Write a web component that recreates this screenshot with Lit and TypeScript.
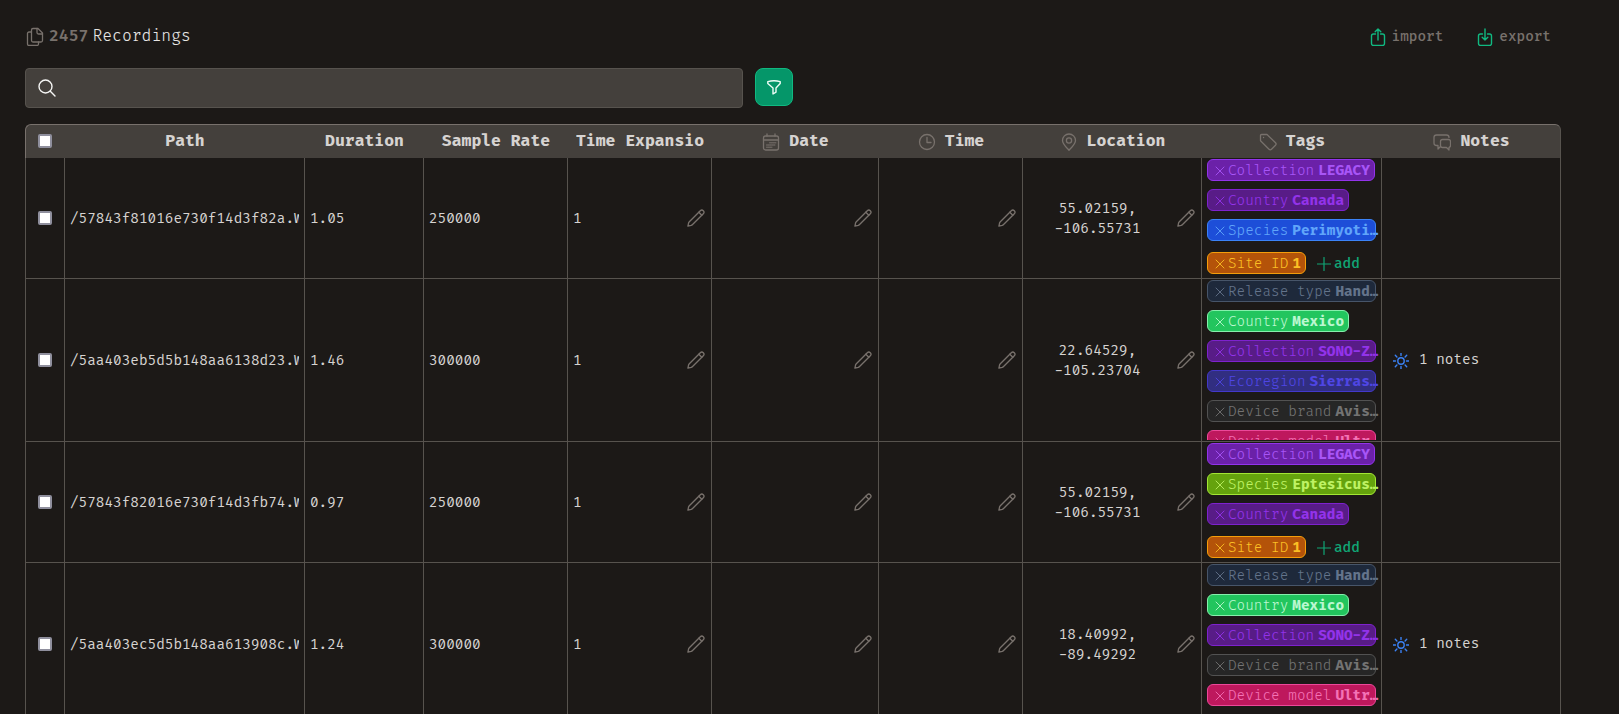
import { LitElement, html, css, svg, nothing } from "lit";
import { customElement, property, state } from "lit/decorators.js";
import { classMap } from "lit/directives/class-map.js";

interface Tag {
  key: string;
  value: string;
  tone: string;
}

interface Recording {
  path: string;
  duration: string;
  rate: string;
  expansion: string;
  lat: string;
  lon: string;
  tags: Tag[];
  notes: number;
}

const tag = (key: string, value: string, tone: string): Tag => ({ key, value, tone });

const RECORDINGS: Recording[] = [
  {
    path: "/57843f81016e730f14d3f82a.WAV",
    duration: "1.05",
    rate: "250000",
    expansion: "1",
    lat: "55.02159",
    lon: "-106.55731",
    notes: 0,
    tags: [
      tag("Collection", "LEGACY", "purple"),
      tag("Country", "Canada", "violet"),
      tag("Species", "Perimyoti…", "blue"),
      tag("Site ID", "1", "amber"),
    ],
  },
  {
    path: "/5aa403eb5d5b148aa6138d23.WAV",
    duration: "1.46",
    rate: "300000",
    expansion: "1",
    lat: "22.64529",
    lon: "-105.23704",
    notes: 1,
    tags: [
      tag("Release type", "Hand…", "slate"),
      tag("Country", "Mexico", "green"),
      tag("Collection", "SONO-Z…", "violet"),
      tag("Ecoregion", "Sierras…", "indigo"),
      tag("Device brand", "Avis…", "neutral"),
      tag("Device model", "Ultr…", "pink"),
    ],
  },
  {
    path: "/57843f82016e730f14d3fb74.WAV",
    duration: "0.97",
    rate: "250000",
    expansion: "1",
    lat: "55.02159",
    lon: "-106.55731",
    notes: 0,
    tags: [
      tag("Collection", "LEGACY", "purple"),
      tag("Species", "Eptesicus…", "lime"),
      tag("Country", "Canada", "violet"),
      tag("Site ID", "1", "amber"),
    ],
  },
  {
    path: "/5aa403ec5d5b148aa613908c.WAV",
    duration: "1.24",
    rate: "300000",
    expansion: "1",
    lat: "18.40992",
    lon: "-89.49292",
    notes: 1,
    tags: [
      tag("Release type", "Hand…", "slate"),
      tag("Country", "Mexico", "green"),
      tag("Collection", "SONO-Z…", "violet"),
      tag("Device brand", "Avis…", "neutral"),
      tag("Device model", "Ultr…", "pink"),
      tag("Ecoregion", "Sierras…", "indigo"),
    ],
  },
];

const GLYPHS: Record<string, unknown> = {
  files: svg`<path d="M7.500 1.500h4.500l4.500 4.500v7.500a1.500 1.500 0 0 1-1.500 1.500H7a1.500 1.500 0 0 1-1.500-1.500V3a1.500 1.500 0 0 1 1.500-1.500z"/><path d="M11 1.500v4a1.500 1.500 0 0 0 1.500 1.500h4"/><path d="M5.500 5H3A1.500 1.500 0 0 0 1.500 6.500v10.500A1.500 1.500 0 0 0 3 18.500h8a1.500 1.500 0 0 0 1.500-1.500v-2"/>`,
  upload: svg`<path d="M9 12V1M6.200 3.800 9 1l2.800 2.800M6.500 6H4.500a2 2 0 0 0-2 2v7.500a2 2 0 0 0 2 2h9a2 2 0 0 0 2-2V8a2 2 0 0 0-2-2H11.500"/>`,
  download: svg`<path d="M9 1v11M6.200 9.200 9 12l2.800-2.800M6.500 6H4.500a2 2 0 0 0-2 2v7.500a2 2 0 0 0 2 2h9a2 2 0 0 0 2-2V8a2 2 0 0 0-2-2H11.500"/>`,
  search: svg`<circle cx="7.500" cy="7.500" r="6.500"/><path d="m12.300 12.300 4.700 4.700"/>`,
  filter: svg`<path d="M1.800 2.600Q8 1 14.200 2.600V4.500L10 9v4.200L7 15V9L1.800 4.500z"/>`,
  calendar: svg`<rect x="1.500" y="3" width="15" height="14" rx="2"/><path d="M1.500 7h15M5 1v2M13 1v2"/><path stroke-width="1" d="M7.500 9.800h6.500M4.500 12H13M4.500 14.200h6" stroke-dasharray="1.500 .500"/>`,
  clock: svg`<circle cx="9" cy="9" r="7.500"/><path d="M9 4.500V9.500h4"/>`,
  pin: svg`<path d="M9 17.200C6 14 2.500 11 2.500 7.500a6.500 6.500 0 0 1 13 0C15.500 11 12 14 9 17.200z"/><circle cx="9" cy="7.500" r="2.600"/>`,
  tag: svg`<path d="M1.500 2.500v5.300L10 16.300a1.800 1.800 0 0 0 2.500 0l4-4a1.800 1.800 0 0 0 0-2.500L8 1.500H2.500a1 1 0 0 0-1 1z"/><path d="M4.500 4.500h.100"/>`,
  chat: svg`<path d="M5 16v-3.500H3.500a2.500 2.500 0 0 1-2.500-2.500V4.500A2.500 2.500 0 0 1 3.500 2H13.500A2.500 2.500 0 0 1 16 4.500M5 16l2.500-2.500"/><path d="M9.500 6.500H15.500A2 2 0 0 1 17.500 8.500v4a2 2 0 0 1-1.500 2v2.500l-2.500-2.500H9.500a2 2 0 0 1-2-2v-4a2 2 0 0 1 2-2z"/>`,
  pencil: svg`<path d="M.900 17.100 1.600 13.800Q1.800 13.200 2.300 12.700L13.300 1.700a2.120 2.120 0 0 1 3 3L5.300 15.700Q4.800 16.200 4.200 16.400z"/><path d="m11.800 3.200 3 3"/>`,
  cross: svg`<path d="m1 1 8 8M9 1 1 9"/>`,
  plus: svg`<path d="M7 .500v13M.500 7h13"/>`,
  sun: svg`<circle cx="8" cy="8" r="3.200"/><path d="M8 0v2.500M8 13.500V16M0 8h2.500M13.500 8H16M2.300 2.300l1.600 1.600M12.100 12.100l1.600 1.600M2.300 13.700l1.600-1.600M12.100 3.900l1.600-1.600"/>`,
};

const icon = (name: string, box: string, size: number, stroke = 1.2) => html`<svg
  class="icon"
  width=${size}
  height=${size}
  viewBox=${box}
  stroke-width=${stroke}
  aria-hidden="true"
>${GLYPHS[name]}</svg>`;

const shared = css`
  *,
  *::before {
    box-sizing: border-box;
  }
  .icon {
    display: block;
    flex: none;
    fill: none;
    stroke: currentColor;
    stroke-linecap: round;
    stroke-linejoin: round;
  }
  button {
    font: inherit;
    color: inherit;
    background: none;
    border: 0;
    margin: 0;
    padding: 0;
    cursor: pointer;
  }
`;

@customElement("recording-tag")
export class RecordingTag extends LitElement {
  @property({ attribute: false }) tag!: Tag;

  static styles = [
    shared,
    css`
      :host {
        display: block;
        max-width: 100%;
      }
      .tag {
        display: flex;
        align-items: center;
        height: 22px;
        padding: 0 4px 0 7px;
        border: 1px solid;
        border-radius: 6px;
        white-space: nowrap;
      }
      .icon {
        margin: 2px 3px 0 0;
      }
      .key {
        padding-top: 2px;
        font-weight: 300;
      }
      .value {
        padding-top: 2px;
        margin-left: 4px;
        font-weight: 700;
      }
      .purple { background: #6b21a8; border-color: #9333ea; color: #a855f7; }
      .violet { background: #581c87; border-color: #7e22ce; color: #9333ea; }
      .blue { background: #1d4ed8; border-color: #3b82f6; color: #60a5fa; }
      .amber { background: #b45309; border-color: #f59e0b; color: #fbbf24; }
      .slate { background: #1e293b; border-color: #475569; color: #64748b; }
      .green { background: #22c55e; border-color: #86efac; color: #bbf7d0; }
      .indigo { background: #312e81; border-color: #4338ca; color: #4f46e5; }
      .neutral { background: #262626; border-color: #525252; color: #737373; }
      .pink { background: #be185d; border-color: #ec4899; color: #f472b6; }
      .lime { background: #65a30d; border-color: #a3e635; color: #bef264; }
    `,
  ];

  render() {
    const { key, value, tone } = this.tag;
    return html`<div class=${classMap({ tag: true, [tone]: true })}>
      <button aria-label="Remove ${key}">${icon("cross", "0 0 10 10", 10, 0.9)}</button>
      <span class="key">${key}</span><span class="value">${value}</span>
    </div>`;
  }
}

@customElement("app-root")
export class AppRoot extends LitElement {
  @state() private query = "";

  static styles = [
    shared,
    css`
      :host {
        display: block;
        height: 100vh;
        overflow: hidden;
        box-sizing: border-box;
        padding: 16px 58px 0 25px;
        background: #1c1917;
        color: #d6d3d1;
        font: 14px/20px "Fira Code", "DejaVu Sans Mono", "Liberation Mono", monospace;
      }
      .top {
        display: flex;
        justify-content: space-between;
        align-items: center;
        height: 40px;
        margin-bottom: 12px;
      }
      .count {
        display: flex;
        align-items: center;
        gap: 4px;
        margin: 0;
        padding-left: 1px;
        font-size: 16px;
        font-weight: 300;
        color: #e7e5e4;
      }
      .count .icon,
      .total {
        color: #78716c;
      }
      .total {
        font-weight: 600;
      }
      .actions {
        display: flex;
        gap: 33px;
        padding: 2px 10px 0 0;
      }
      .action {
        display: flex;
        align-items: center;
        gap: 5px;
        color: #78716c;
        font-weight: 500;
      }
      .action .icon {
        color: #10b981;
      }
      .tools {
        display: flex;
        align-items: flex-start;
        gap: 12px;
        max-width: 768px;
        margin-bottom: 16px;
      }
      .search {
        display: flex;
        flex: 1;
        align-items: center;
        gap: 12px;
        height: 40px;
        padding: 0 12px;
        border: 1px solid #57534e;
        border-radius: 4px;
        background: #44403c;
        color: #f5f5f4;
      }
      .field {
        flex: 1;
        min-width: 0;
        border: 0;
        outline: 0;
        background: none;
        color: inherit;
        font: inherit;
      }
      .filter {
        display: grid;
        place-items: center;
        width: 38px;
        height: 38px;
        border: 1px solid #10b981;
        border-radius: 8px;
        background: #059669;
        color: #ecfdf5;
      }
      .grid {
        width: 100%;
        table-layout: fixed;
        border-collapse: separate;
        border-spacing: 0;
      }
      .c-check { width: 39px; }
      .c-path { width: 240px; }
      .c-duration { width: 119px; }
      .c-small { width: 144px; }
      .c-date { width: 167px; }
      .c-location { width: 179px; }
      .c-wide { width: 180px; }
      th {
        height: 34px;
        padding: 0 7px 0 9px;
        border-top: 1px solid #78716c;
        background: #44403c;
        font-size: 16px;
        font-weight: 700;
      }
      th:first-child {
        border-left: 1px solid #78716c;
        border-top-left-radius: 6px;
      }
      th:last-child {
        border-right: 1px solid #57534e;
        border-top-right-radius: 6px;
      }
      .head {
        display: flex;
        justify-content: safe center;
        align-items: center;
        gap: 9px;
        padding-bottom: 2px;
        overflow: hidden;
        white-space: nowrap;
      }
      .head .icon {
        margin-top: 3px;
        color: #78716c;
      }
      td {
        padding: 1px 5px;
        border-left: 1px solid #57534e;
        border-bottom: 1px solid #57534e;
        vertical-align: middle;
      }
      td:last-child {
        border-right: 1px solid #57534e;
      }
      td.pick {
        padding: 0;
      }
      th.pick {
        padding: 0 0 2px;
      }
      .box {
        appearance: none;
        display: block;
        width: 14px;
        height: 14px;
        margin: 0 auto;
        border: 2px solid #8f8f9d;
        border-radius: 2px;
        background: #fff;
      }
      .box:checked {
        background: #10b981;
      }
      .text {
        padding-top: 2px;
        overflow: hidden;
        white-space: nowrap;
      }
      .edit {
        display: flex;
        align-items: center;
        justify-content: space-between;
        padding-right: 1px;
      }
      .edit button {
        display: flex;
        justify-content: flex-end;
        width: 28px;
        color: #78716c;
      }
      .place {
        flex: 1;
        text-align: center;
      }
      .tagcell {
        padding-right: 1px;
      }
      .tags {
        display: flex;
        flex-wrap: wrap;
        align-items: center;
        gap: 8px;
        max-height: 160px;
        padding-right: 4px;
        overflow: hidden;
      }
      .add {
        display: flex;
        align-items: center;
        gap: 3px;
        height: 28px;
        padding: 1px 0 0 3px;
        color: #10a575;
        font-weight: 500;
      }
      .notes {
        display: flex;
        align-items: center;
        gap: 10px;
        padding-left: 6px;
      }
      .notes .icon {
        margin-top: 2px;
        color: #3b82f6;
      }
    `,
  ];

  private head(label: string, glyph = "") {
    return html`<th scope="col">
      <div class="head">
        ${glyph ? icon(glyph, "0 0 18 18", 18, 1.3) : nothing}<span>${label}</span>
      </div>
    </th>`;
  }

  private pencil(label: string) {
    return html`<button aria-label=${label}>${icon("pencil", "0 0 18 18", 18, 1.3)}</button>`;
  }

  private row(r: Recording) {
    return html`<tr>
      <td class="pick"><input class="box" type="checkbox" aria-label="Select ${r.path}" /></td>
      <td><div class="text">${r.path}</div></td>
      <td><div class="text">${r.duration}</div></td>
      <td><div class="text">${r.rate}</div></td>
      <td><div class="edit"><span class="text">${r.expansion}</span>${this.pencil("Edit time expansion")}</div></td>
      <td><div class="edit"><span></span>${this.pencil("Edit date")}</div></td>
      <td><div class="edit"><span></span>${this.pencil("Edit time")}</div></td>
      <td>
        <div class="edit">
          <span class="text place">${r.lat},<br />${r.lon}</span>${this.pencil("Edit location")}
        </div>
      </td>
      <td class="tagcell">
        <div class="tags">
          ${r.tags.map((t) => html`<recording-tag .tag=${t}></recording-tag>`)}
          <button class="add">${icon("plus", "0 0 14 14", 14)}<span>add</span></button>
        </div>
      </td>
      <td>
        ${r.notes
          ? html`<div class="notes">${icon("sun", "0 0 16 16", 16, 1.4)}<span>${r.notes} notes</span></div>`
          : nothing}
      </td>
    </tr>`;
  }

  render() {
    return html`
      <header class="top">
        <h1 class="count">
          ${icon("files", "0 0 19 19", 19, 1.3)}<span class="total">2457</span><span>Recordings</span>
        </h1>
        <div class="actions">
          <button class="action">${icon("upload", "0 0 18 18", 18, 1.4)}<span>import</span></button>
          <button class="action">${icon("download", "0 0 18 18", 18, 1.4)}<span>export</span></button>
        </div>
      </header>
      <div class="tools">
        <label class="search">
          ${icon("search", "0 0 18 18", 18, 1.4)}
          <input
            class="field"
            type="text"
            aria-label="Search recordings"
            .value=${this.query}
            @input=${(e: Event) => (this.query = (e.target as HTMLInputElement).value)}
          />
        </label>
        <button class="filter" aria-label="Filter">${icon("filter", "0 0 16 16", 16, 1.4)}</button>
      </div>
      <table class="grid">
        <colgroup>
          <col class="c-check" /><col class="c-path" /><col class="c-duration" /><col class="c-small" />
          <col class="c-small" /><col class="c-date" /><col class="c-small" /><col class="c-location" />
          <col class="c-wide" /><col class="c-wide" />
        </colgroup>
        <thead>
          <tr>
            <th class="pick" scope="col"><input class="box" type="checkbox" aria-label="Select all" /></th>
            ${this.head("Path")} ${this.head("Duration")} ${this.head("Sample Rate")}
            ${this.head("Time Expansion")} ${this.head("Date", "calendar")} ${this.head("Time", "clock")}
            ${this.head("Location", "pin")} ${this.head("Tags", "tag")} ${this.head("Notes", "chat")}
          </tr>
        </thead>
        <tbody>
          ${RECORDINGS.map((r) => this.row(r))}
        </tbody>
      </table>
    `;
  }
}
